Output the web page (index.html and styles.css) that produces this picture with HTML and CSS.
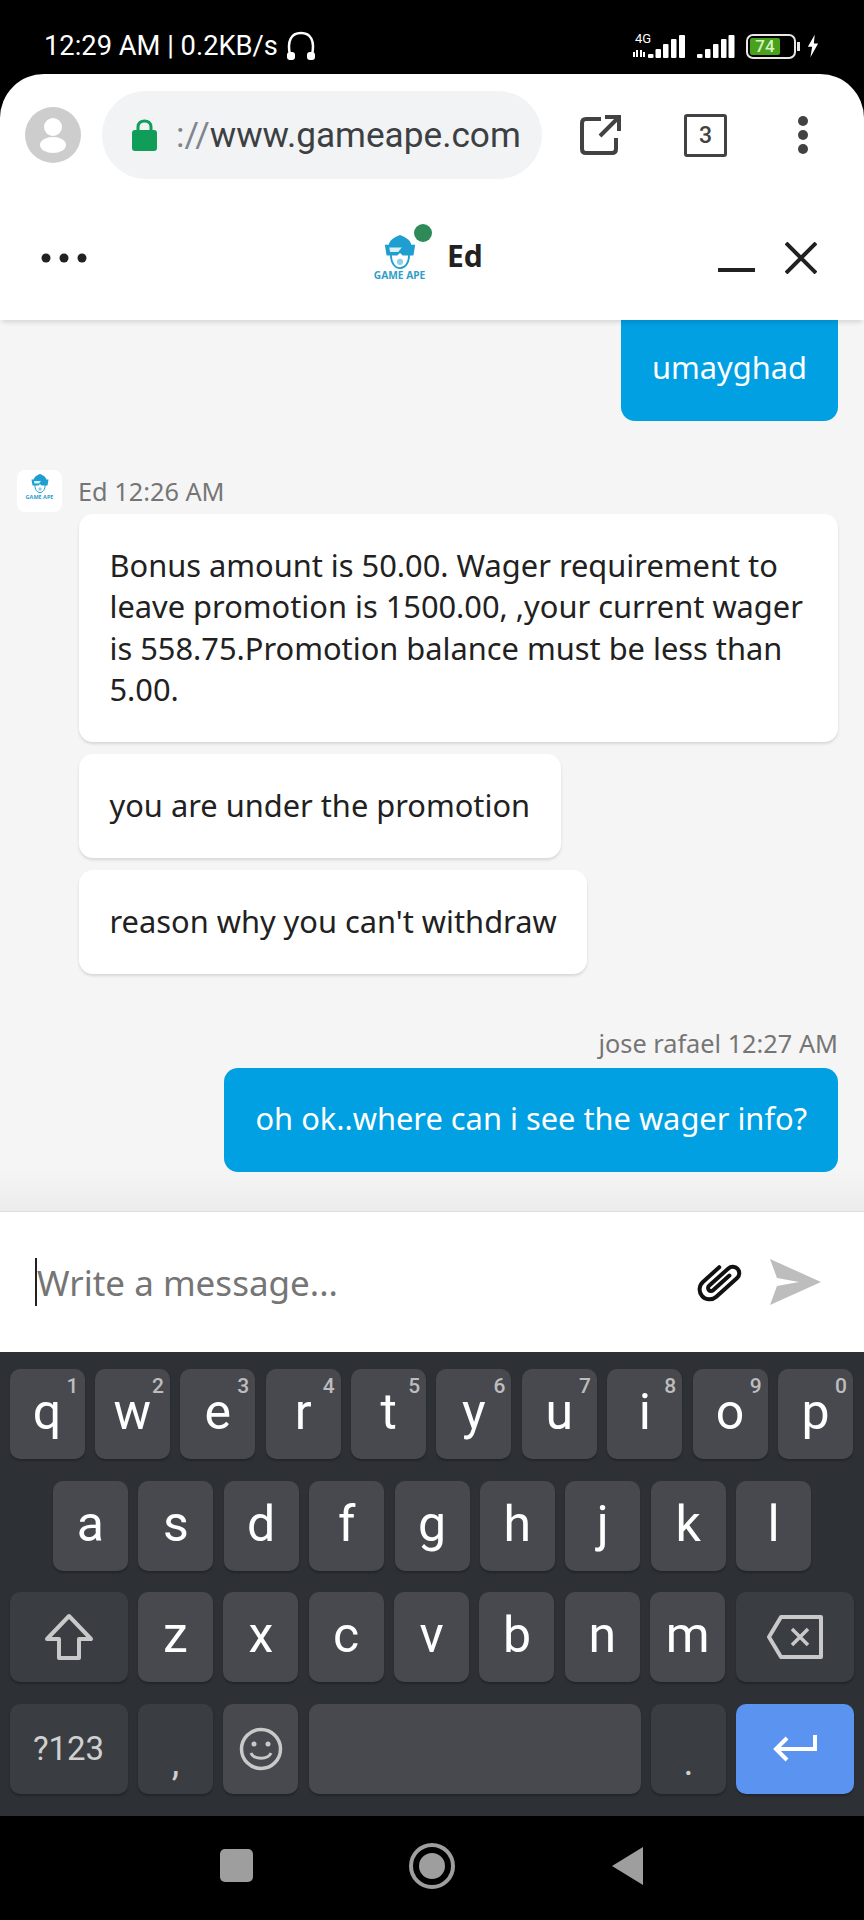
FILE: index.html
```html
<!DOCTYPE html>
<html lang="en">
<head>
    <meta charset="UTF-8">
    <meta name="viewport" content="width=device-width, initial-scale=1.0">
    <title>Game Ape chat</title>
    <link rel="stylesheet" href="styles.css">
</head>
<body>
    <svg class="defs" width="0" height="0">
        <symbol id="ape" viewBox="0 0 40 38">
            <path d="M7 14 C7 6 13 3 20 0 C27 3 33 6 33 14 Z" fill="#1f9fd0"/>
            <path d="M10 20 C9 32 15 37 20 37 C25 37 31 32 30 20" fill="#fff" stroke="#1f9fd0" stroke-width="2"/>
            <path d="M3 11 H37 L35 23 H23 L20 20 L17 23 H5 Z" fill="#1f9fd0"/>
            <path d="M8 14 H22 L18 19 H9 Z" fill="#d8f0fa"/>
            <circle cx="20" cy="30" r="3.500" fill="#8fcfe8"/>
        </symbol>
    </svg>

    <div class="status-bar">
        <div class="status-left">
            <span>12:29 AM | 0.2KB/s</span>
            <svg width="32" height="30" viewBox="0 0 32 30" fill="none" stroke="#fff" stroke-width="2.500">
                <path d="M5 24 C2 10 6 2 16 2 C26 2 30 10 27 24"/>
                <rect x="2" y="21" width="8" height="8" rx="3" fill="#fff" stroke="none"/>
                <rect x="22" y="21" width="8" height="8" rx="3" fill="#fff" stroke="none"/>
            </svg>
        </div>
        <div class="status-right">
            <div class="network">
                <span class="net-label">4G</span>
                <svg width="53" height="26" viewBox="0 0 53 26" fill="#fff">
                    <rect x="0" y="19" width="2" height="5"/>
                    <rect x="3" y="17" width="2" height="7"/>
                    <rect x="7" y="17" width="2" height="7"/>
                    <rect x="10" y="19" width="2" height="5"/>
                    <rect x="15" y="21" width="5.500" height="4" rx="1"/>
                    <rect x="22.500" y="16" width="5.500" height="9" rx="1"/>
                    <rect x="30" y="11" width="5.500" height="14" rx="1"/>
                    <rect x="38" y="6" width="5.500" height="19" rx="1"/>
                    <rect x="46" y="2" width="6" height="23" rx="1"/>
                </svg>
            </div>
            <svg class="signal" width="38" height="26" viewBox="0 0 38 26" fill="#fff">
                <rect x="0" y="21" width="5.500" height="4" rx="1"/>
                <rect x="8" y="16" width="5.500" height="9" rx="1"/>
                <rect x="16" y="11" width="5.500" height="14" rx="1"/>
                <rect x="24" y="6" width="5.500" height="19" rx="1"/>
                <rect x="31.500" y="2" width="6" height="23" rx="1"/>
            </svg>
            <div class="battery"><span class="battery-level">74</span></div>
            <span class="battery-tip"></span>
            <svg width="12" height="26" viewBox="0 0 14 26" fill="#fff">
                <path d="M9 0 L1 14 H6 L4 26 L13 10 H8 Z"/>
            </svg>
        </div>
    </div>

    <main class="screen">
        <div class="browser-bar">
            <svg class="avatar" width="56" height="56" viewBox="0 0 56 56">
                <circle cx="28" cy="28" r="28" fill="#cdcdcd"/>
                <circle cx="28" cy="20" r="9" fill="#fff"/>
                <ellipse cx="28" cy="38" rx="13" ry="8" fill="#fff"/>
            </svg>
            <div class="url-pill">
                <svg width="25" height="32" viewBox="0 0 25 32">
                    <path d="M6 13 V8 C6 4 9 2 12.500 2 C16 2 19 4 19 8 V13" fill="none" stroke="#0f9d58" stroke-width="3"/>
                    <rect x="0" y="11" width="25" height="21" rx="3" fill="#0f9d58"/>
                </svg>
                <span class="url"><span class="url-scheme">://</span>www.gameape.com</span>
            </div>
            <svg class="open-icon" width="42" height="42" viewBox="0 0 42 42" fill="none" stroke="#424242" stroke-width="4">
                <path d="M21 5 H6 Q2 5 2 9 V35 Q2 39 6 39 H32 Q36 39 36 35 V24"/>
                <path d="M20 22 L37 5 M25 3 H39 V17"/>
            </svg>
            <div class="tab-count">3</div>
            <svg class="menu-icon" width="12" height="40" viewBox="0 0 12 40" fill="#424242">
                <circle cx="6" cy="6" r="5"/>
                <circle cx="6" cy="20" r="5"/>
                <circle cx="6" cy="34" r="5"/>
            </svg>
        </div>

        <header class="chat-head">
            <svg class="more" width="46" height="10" viewBox="0 0 46 10" fill="#212121">
                <circle cx="5" cy="5" r="4.500"/>
                <circle cx="23" cy="5" r="4.500"/>
                <circle cx="41" cy="5" r="4.500"/>
            </svg>
            <div class="agent">
                <div class="agent-logo">
                    <svg width="36" height="34"><use href="#ape"/></svg>
                    <span class="logo-text">GAME APE</span>
                    <span class="online"></span>
                </div>
                <span class="agent-name">Ed</span>
            </div>
            <div class="chat-controls">
                <span class="minimize"></span>
                <svg width="32" height="32" viewBox="0 0 32 32" stroke="#212121" stroke-width="4">
                    <path d="M1 1 L31 31 M31 1 L1 31"/>
                </svg>
            </div>
        </header>

        <section class="messages">
            <div class="bubble outgoing first">umayghad</div>

            <div class="meta incoming-meta">
                <div class="mini-logo">
                    <svg width="20" height="19"><use href="#ape"/></svg>
                    <span class="mini-text">GAME APE</span>
                </div>
                <span>Ed 12:26 AM</span>
            </div>
            <div class="bubble incoming">Bonus amount is 50.00. Wager requirement to leave promotion is 1500.00, ,your current wager is 558.75.Promotion balance must be less than 5.00.</div>
            <div class="bubble incoming">you are under the promotion</div>
            <div class="bubble incoming">reason why you can't withdraw</div>

            <div class="meta outgoing-meta">jose rafael 12:27 AM</div>
            <div class="bubble outgoing">oh ok..where can i see the wager info?</div>
        </section>

        <div class="composer">
            <span class="caret"></span>
            <span class="placeholder">Write a message...</span>
            <svg class="clip" width="48" height="44" viewBox="0 0 48 44" fill="none" stroke="#111" stroke-width="4" stroke-linecap="round">
                <path transform="translate(24 20) rotate(48)" d="M3 -10 V12 A3 3 0 0 1 -3 12 V-14 A6.500 6.500 0 0 1 10 -14 V14 A10 10 0 0 1 -10 14 V-8"/>
            </svg>
            <svg class="send" width="52" height="46" viewBox="0 0 52 46" fill="#bdbdbd">
                <path d="M1 0 L52 23 L1 46 L8 27 L30 23 L8 19 Z"/>
            </svg>
        </div>
    </main>

    <div class="keyboard">
        <div class="key-row">
            <div class="key">q<sup>1</sup></div>
            <div class="key">w<sup>2</sup></div>
            <div class="key">e<sup>3</sup></div>
            <div class="key">r<sup>4</sup></div>
            <div class="key">t<sup>5</sup></div>
            <div class="key">y<sup>6</sup></div>
            <div class="key">u<sup>7</sup></div>
            <div class="key">i<sup>8</sup></div>
            <div class="key">o<sup>9</sup></div>
            <div class="key">p<sup>0</sup></div>
        </div>
        <div class="key-row centered">
            <div class="key">a</div>
            <div class="key">s</div>
            <div class="key">d</div>
            <div class="key">f</div>
            <div class="key">g</div>
            <div class="key">h</div>
            <div class="key">j</div>
            <div class="key">k</div>
            <div class="key">l</div>
        </div>
        <div class="key-row">
            <div class="key wide dark">
                <svg width="50" height="48" viewBox="0 0 50 48" fill="none" stroke="#c9c9c9" stroke-width="4" stroke-linejoin="round">
                    <path d="M25 3 L47 26 H35 V45 H15 V26 H3 Z"/>
                </svg>
            </div>
            <div class="key">z</div>
            <div class="key">x</div>
            <div class="key">c</div>
            <div class="key">v</div>
            <div class="key">b</div>
            <div class="key">n</div>
            <div class="key">m</div>
            <div class="key wide dark">
                <svg width="56" height="44" viewBox="0 0 56 44" fill="none" stroke="#c9c9c9" stroke-width="4" stroke-linejoin="round">
                    <path d="M14 2 H54 V42 H14 L2 22 Z"/>
                    <path d="M25 14 L41 30 M41 14 L25 30" stroke-width="3.500"/>
                </svg>
            </div>
        </div>
        <div class="key-row">
            <div class="key wide dark symbols">?123</div>
            <div class="key dark punct">,</div>
            <div class="key emoji">
                <svg width="44" height="44" viewBox="0 0 44 44" fill="none" stroke="#c9c9c9" stroke-width="3.500">
                    <circle cx="22" cy="22" r="19.500"/>
                    <circle cx="15" cy="17" r="2.500" fill="#c9c9c9" stroke="none"/>
                    <circle cx="29" cy="17" r="2.500" fill="#c9c9c9" stroke="none"/>
                    <path d="M12 26 C15 33 29 33 32 26" stroke-width="3"/>
                </svg>
            </div>
            <div class="key space"></div>
            <div class="key dark punct">.</div>
            <div class="key wide enter">
                <svg width="44" height="30" viewBox="0 0 44 30" fill="none" stroke="#fff" stroke-width="4">
                    <path d="M42 1 V15 H4 M14 4 L3 15 L14 26"/>
                </svg>
            </div>
        </div>
    </div>

    <nav class="nav-bar">
        <span class="nav-square"></span>
        <span class="nav-circle"><span class="nav-dot"></span></span>
        <svg width="32" height="38" viewBox="0 0 32 38" fill="#9e9e9e">
            <path d="M32 0 V38 L1 19 Z"/>
        </svg>
    </nav>
</body>
</html>
```

FILE: styles.css
```css
*{
    margin: 0;
    padding: 0;
    box-sizing: border-box;
}
body{
    width: 864px;
    height: 1920px;
    overflow: hidden;
    background: #000;
    font-family: 'Noto Sans', sans-serif;
    color: #212121;
    display: flex;
    flex-direction: column;
}
.defs{
    position: absolute;
}

/* status bar */
.status-bar{
    height: 74px;
    padding: 18px 45px 0 44px;
    display: flex;
    justify-content: space-between;
    align-items: center;
    color: #fff;
    font-family: Roboto, sans-serif;
    font-size: 27.300px;
}
.status-left{
    display: flex;
    align-items: center;
    gap: 7px;
}
.status-right{
    display: flex;
    align-items: center;
}
.network{
    position: relative;
    width: 53px;
}
.network svg{
    display: block;
}
.net-label{
    position: absolute;
    left: 2px;
    top: -2px;
    font-size: 13px;
}
.signal{
    margin-left: 11px;
}
.battery{
    margin-left: 11px;
    width: 50px;
    height: 25px;
    border: 2px solid #e8e8e8;
    border-radius: 7px;
    padding: 2px;
}
.battery-level{
    display: block;
    width: 30px;
    height: 17px;
    background: #47a11b;
    border-radius: 2px;
    color: #d9f2c8;
    font-size: 17px;
    font-weight: 500;
    line-height: 17px;
    text-align: center;
}
.battery-tip{
    width: 3px;
    height: 9px;
    margin: 0 7px 0 1px;
    background: #e8e8e8;
}

/* white part with browser bar and chat */
.screen{
    height: 1278px;
    background: #fff;
    border-radius: 44px 44px 0 0;
    display: flex;
    flex-direction: column;
    overflow: hidden;
}
.browser-bar{
    height: 122px;
    flex-shrink: 0;
    display: flex;
    align-items: center;
    padding: 0 0 0 25px;
}
.url-pill{
    width: 440px;
    height: 88px;
    margin-left: 21px;
    padding-left: 30px;
    background: #f1f3f4;
    border-radius: 44px;
    display: flex;
    align-items: center;
    gap: 19px;
}
.url{
    font-family: Roboto, sans-serif;
    font-size: 35.200px;
    color: #3c4043;
    white-space: nowrap;
}
.url-scheme{
    color: #80868b;
}
.open-icon{
    margin-left: 38px;
}
.tab-count{
    width: 43px;
    height: 43px;
    margin-left: 62px;
    border: 3px solid #424242;
    border-radius: 3px;
    font-family: Roboto, sans-serif;
    font-size: 23px;
    font-weight: 500;
    color: #424242;
    text-align: center;
    line-height: 37px;
}
.menu-icon{
    margin-left: 70px;
}

.chat-head{
    height: 124px;
    flex-shrink: 0;
    display: flex;
    align-items: center;
    padding: 0 47px 0 41px;
    background: #fff;
    box-shadow: 0 4px 5px -2px rgba(0, 0, 0, .14);
    position: relative;
    z-index: 2;
}
.agent{
    margin-left: 286px;
    display: flex;
    align-items: flex-start;
    gap: 21px;
}
.agent-logo{
    position: relative;
    width: 53px;
    display: flex;
    flex-direction: column;
    align-items: center;
}
.logo-text{
    font-size: 10.200px;
    font-weight: 700;
    color: #2f9ec9;
    white-space: nowrap;
    line-height: 11px;
    margin-top: 1px;
}
.online{
    position: absolute;
    top: -11px;
    right: -6px;
    width: 18px;
    height: 18px;
    border-radius: 50%;
    background: #2e8b57;
}
.agent-name{
    font-size: 30px;
    font-weight: 700;
    line-height: 36px;
    margin-top: 3px;
}
.chat-controls{
    margin-left: auto;
    display: flex;
    align-items: flex-end;
    gap: 30px;
}
.minimize{
    width: 37px;
    height: 4px;
    margin-bottom: 2px;
    background: #212121;
}

/* messages */
.messages{
    flex: 1;
    padding: 0 26px 0 79px;
    display: flex;
    flex-direction: column;
    align-items: flex-start;
    background: linear-gradient(#f5f5f5 calc(100% - 42px), #ececec);
    border-bottom: 1px solid #ddd;
    font-size: 30.800px;
    line-height: 41.500px;
}
.bubble{
    padding: 30.500px 31px 32px;
    border-radius: 14px;
}
.incoming{
    background: #fff;
    margin-bottom: 12px;
    padding: 31px 30.500px 31.500px;
    box-shadow: 0 2px 3px rgba(0, 0, 0, .12);
}
.outgoing{
    align-self: flex-end;
    background: #00a0e3;
    color: #fff;
}
.first{
    border-radius: 0 0 14px 14px;
    padding-top: 27px;
    padding-bottom: 32px;
}
.meta{
    font-size: 25.300px;
    line-height: 30px;
    color: #757575;
}
.incoming-meta{
    margin: 49px 0 2px -62px;
    display: flex;
    align-items: center;
    gap: 16px;
}
.mini-logo{
    width: 45px;
    height: 42px;
    background: #fff;
    border-radius: 8px;
    display: flex;
    flex-direction: column;
    align-items: center;
    padding-top: 4px;
}
.mini-text{
    font-size: 5.500px;
    font-weight: 700;
    line-height: 8px;
    color: #2f9ec9;
    white-space: nowrap;
}
.outgoing-meta{
    align-self: flex-end;
    margin: 41.500px 0 10px;
}

/* composer */
.composer{
    height: 140px;
    flex-shrink: 0;
    display: flex;
    align-items: center;
    padding: 0 43px 0 35px;
    background: #fff;
}
.caret{
    width: 2px;
    height: 48px;
    background: #212121;
}
.placeholder{
    font-size: 35px;
    color: #757575;
    margin-right: auto;
}
.send{
    margin-left: 25px;
}

/* keyboard */
.keyboard{
    height: 464px;
    padding: 17px 9.500px 0;
    background: #2d3136;
    display: flex;
    flex-direction: column;
    gap: 21.500px;
    font-family: Roboto, sans-serif;
}
.key-row{
    display: flex;
    gap: 10.400px;
    height: 90px;
}
.key-row.centered{
    justify-content: center;
}
.key{
    position: relative;
    flex: 0 0 75px;
    background: #47494e;
    border-radius: 10px;
    box-shadow: 0 2px 2px rgba(0, 0, 0, .25);
    display: flex;
    justify-content: center;
    align-items: center;
    padding-bottom: 4px;
    color: #fff;
    font-size: 50px;
}
.key sup{
    position: absolute;
    top: 5px;
    right: 6px;
    font-size: 21px;
    font-weight: 500;
    line-height: 24px;
    color: #bdbdbd;
}
.wide{
    flex-basis: 118px;
    padding-bottom: 0;
}
.emoji{
    padding-bottom: 0;
}
.dark{
    background: #3a3d42;
}
.symbols{
    font-size: 33px;
    color: #d0d0d0;
}
.punct{
    font-size: 38px;
    color: #d0d0d0;
    padding: 26px 0 0;
}
.space{
    flex-basis: 332px;
}
.enter{
    background: #5a94f0;
}

/* nav bar */
.nav-bar{
    flex: 1;
    display: flex;
    align-items: center;
    justify-content: center;
    padding: 0 2px 5px 0;
    background: #000;
}
.nav-square{
    width: 33px;
    height: 33px;
    border-radius: 5px;
    background: #9e9e9e;
}
.nav-circle{
    width: 46px;
    height: 46px;
    margin: 0 156px;
    border: 4px solid #9e9e9e;
    border-radius: 50%;
    display: flex;
    align-items: center;
    justify-content: center;
}
.nav-dot{
    width: 26px;
    height: 26px;
    border-radius: 50%;
    background: #9e9e9e;
}
```
